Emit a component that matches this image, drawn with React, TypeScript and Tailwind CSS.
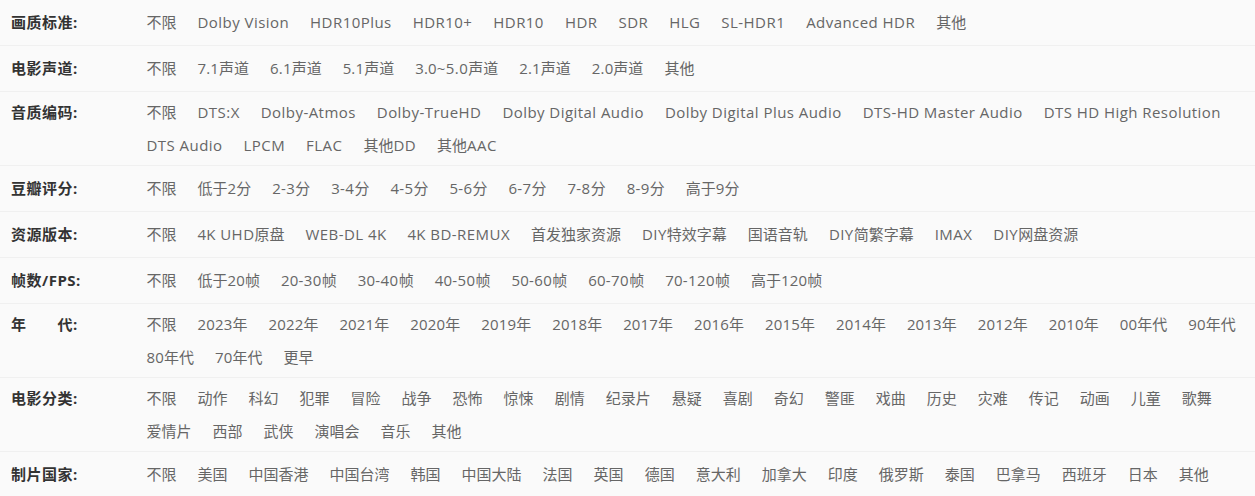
import React from "react";

const rows: { label: string; items: string[] }[] = [
  { label: "画质标准:", items: ["不限", "Dolby Vision", "HDR10Plus", "HDR10+", "HDR10", "HDR", "SDR", "HLG", "SL-HDR1", "Advanced HDR", "其他"] },
  { label: "电影声道:", items: ["不限", "7.1声道", "6.1声道", "5.1声道", "3.0~5.0声道", "2.1声道", "2.0声道", "其他"] },
  { label: "音质编码:", items: ["不限", "DTS:X", "Dolby-Atmos", "Dolby-TrueHD", "Dolby Digital Audio", "Dolby Digital Plus Audio", "DTS-HD Master Audio", "DTS HD High Resolution", "DTS Audio", "LPCM", "FLAC", "其他DD", "其他AAC"] },
  { label: "豆瓣评分:", items: ["不限", "低于2分", "2-3分", "3-4分", "4-5分", "5-6分", "6-7分", "7-8分", "8-9分", "高于9分"] },
  { label: "资源版本:", items: ["不限", "4K UHD原盘", "WEB-DL 4K", "4K BD-REMUX", "首发独家资源", "DIY特效字幕", "国语音轨", "DIY简繁字幕", "IMAX", "DIY网盘资源"] },
  { label: "帧数/FPS:", items: ["不限", "低于20帧", "20-30帧", "30-40帧", "40-50帧", "50-60帧", "60-70帧", "70-120帧", "高于120帧"] },
  { label: "年　　代:", items: ["不限", "2023年", "2022年", "2021年", "2020年", "2019年", "2018年", "2017年", "2016年", "2015年", "2014年", "2013年", "2012年", "2010年", "00年代", "90年代", "80年代", "70年代", "更早"] },
  { label: "电影分类:", items: ["不限", "动作", "科幻", "犯罪", "冒险", "战争", "恐怖", "惊悚", "剧情", "纪录片", "悬疑", "喜剧", "奇幻", "警匪", "戏曲", "历史", "灾难", "传记", "动画", "儿童", "歌舞", "爱情片", "西部", "武侠", "演唱会", "音乐", "其他"] },
  { label: "制片国家:", items: ["不限", "美国", "中国香港", "中国台湾", "韩国", "中国大陆", "法国", "英国", "德国", "意大利", "加拿大", "印度", "俄罗斯", "泰国", "巴拿马", "西班牙", "日本", "其他"] },
];

function Mixed({ text }: { text: string }) {
  const parts = text.split(/([0-9.]+|[\u0000-\u2fff]+)/).filter((p) => p.length > 0);
  return (
    <>
      {parts.map((p, k) => {
        if (/^[0-9.]+$/.test(p)) {
          return (
            <span key={k} className="tracking-[0.15px]">
              {p}
            </span>
          );
        }
        if (/^[\u0000-\u2fff]+$/.test(p)) {
          return (
            <span key={k} className="tracking-[0.45px]">
              {p}
            </span>
          );
        }
        return <span key={k}>{p}</span>;
      })}
    </>
  );
}

export default function App() {
  return (
    <div
      className="w-[1255px] min-h-[496px] bg-[#fafafa] overflow-hidden"
      style={{ fontFamily: '"Open Sans", "Noto Sans CJK SC", sans-serif' }}
    >
      {rows.map((r, i) => (
        <div key={i} className="flex items-baseline border-b border-[#f0f0f0]">
          <div className="w-[136px] shrink-0 pl-[11px] leading-[33px] text-[15px] font-bold tracking-[0.5px] text-[#333] whitespace-pre">
            {r.label}
          </div>
          <div className="flex flex-wrap content-center flex-1 min-h-[45px] py-[3.5px]">
            {r.items.map((it, j) => (
              <span
                key={j}
                className="px-[10.5px] leading-[33px] text-[15px] text-[#666] whitespace-nowrap cursor-pointer"
              >
                <Mixed text={it} />
              </span>
            ))}
          </div>
        </div>
      ))}
    </div>
  );
}
